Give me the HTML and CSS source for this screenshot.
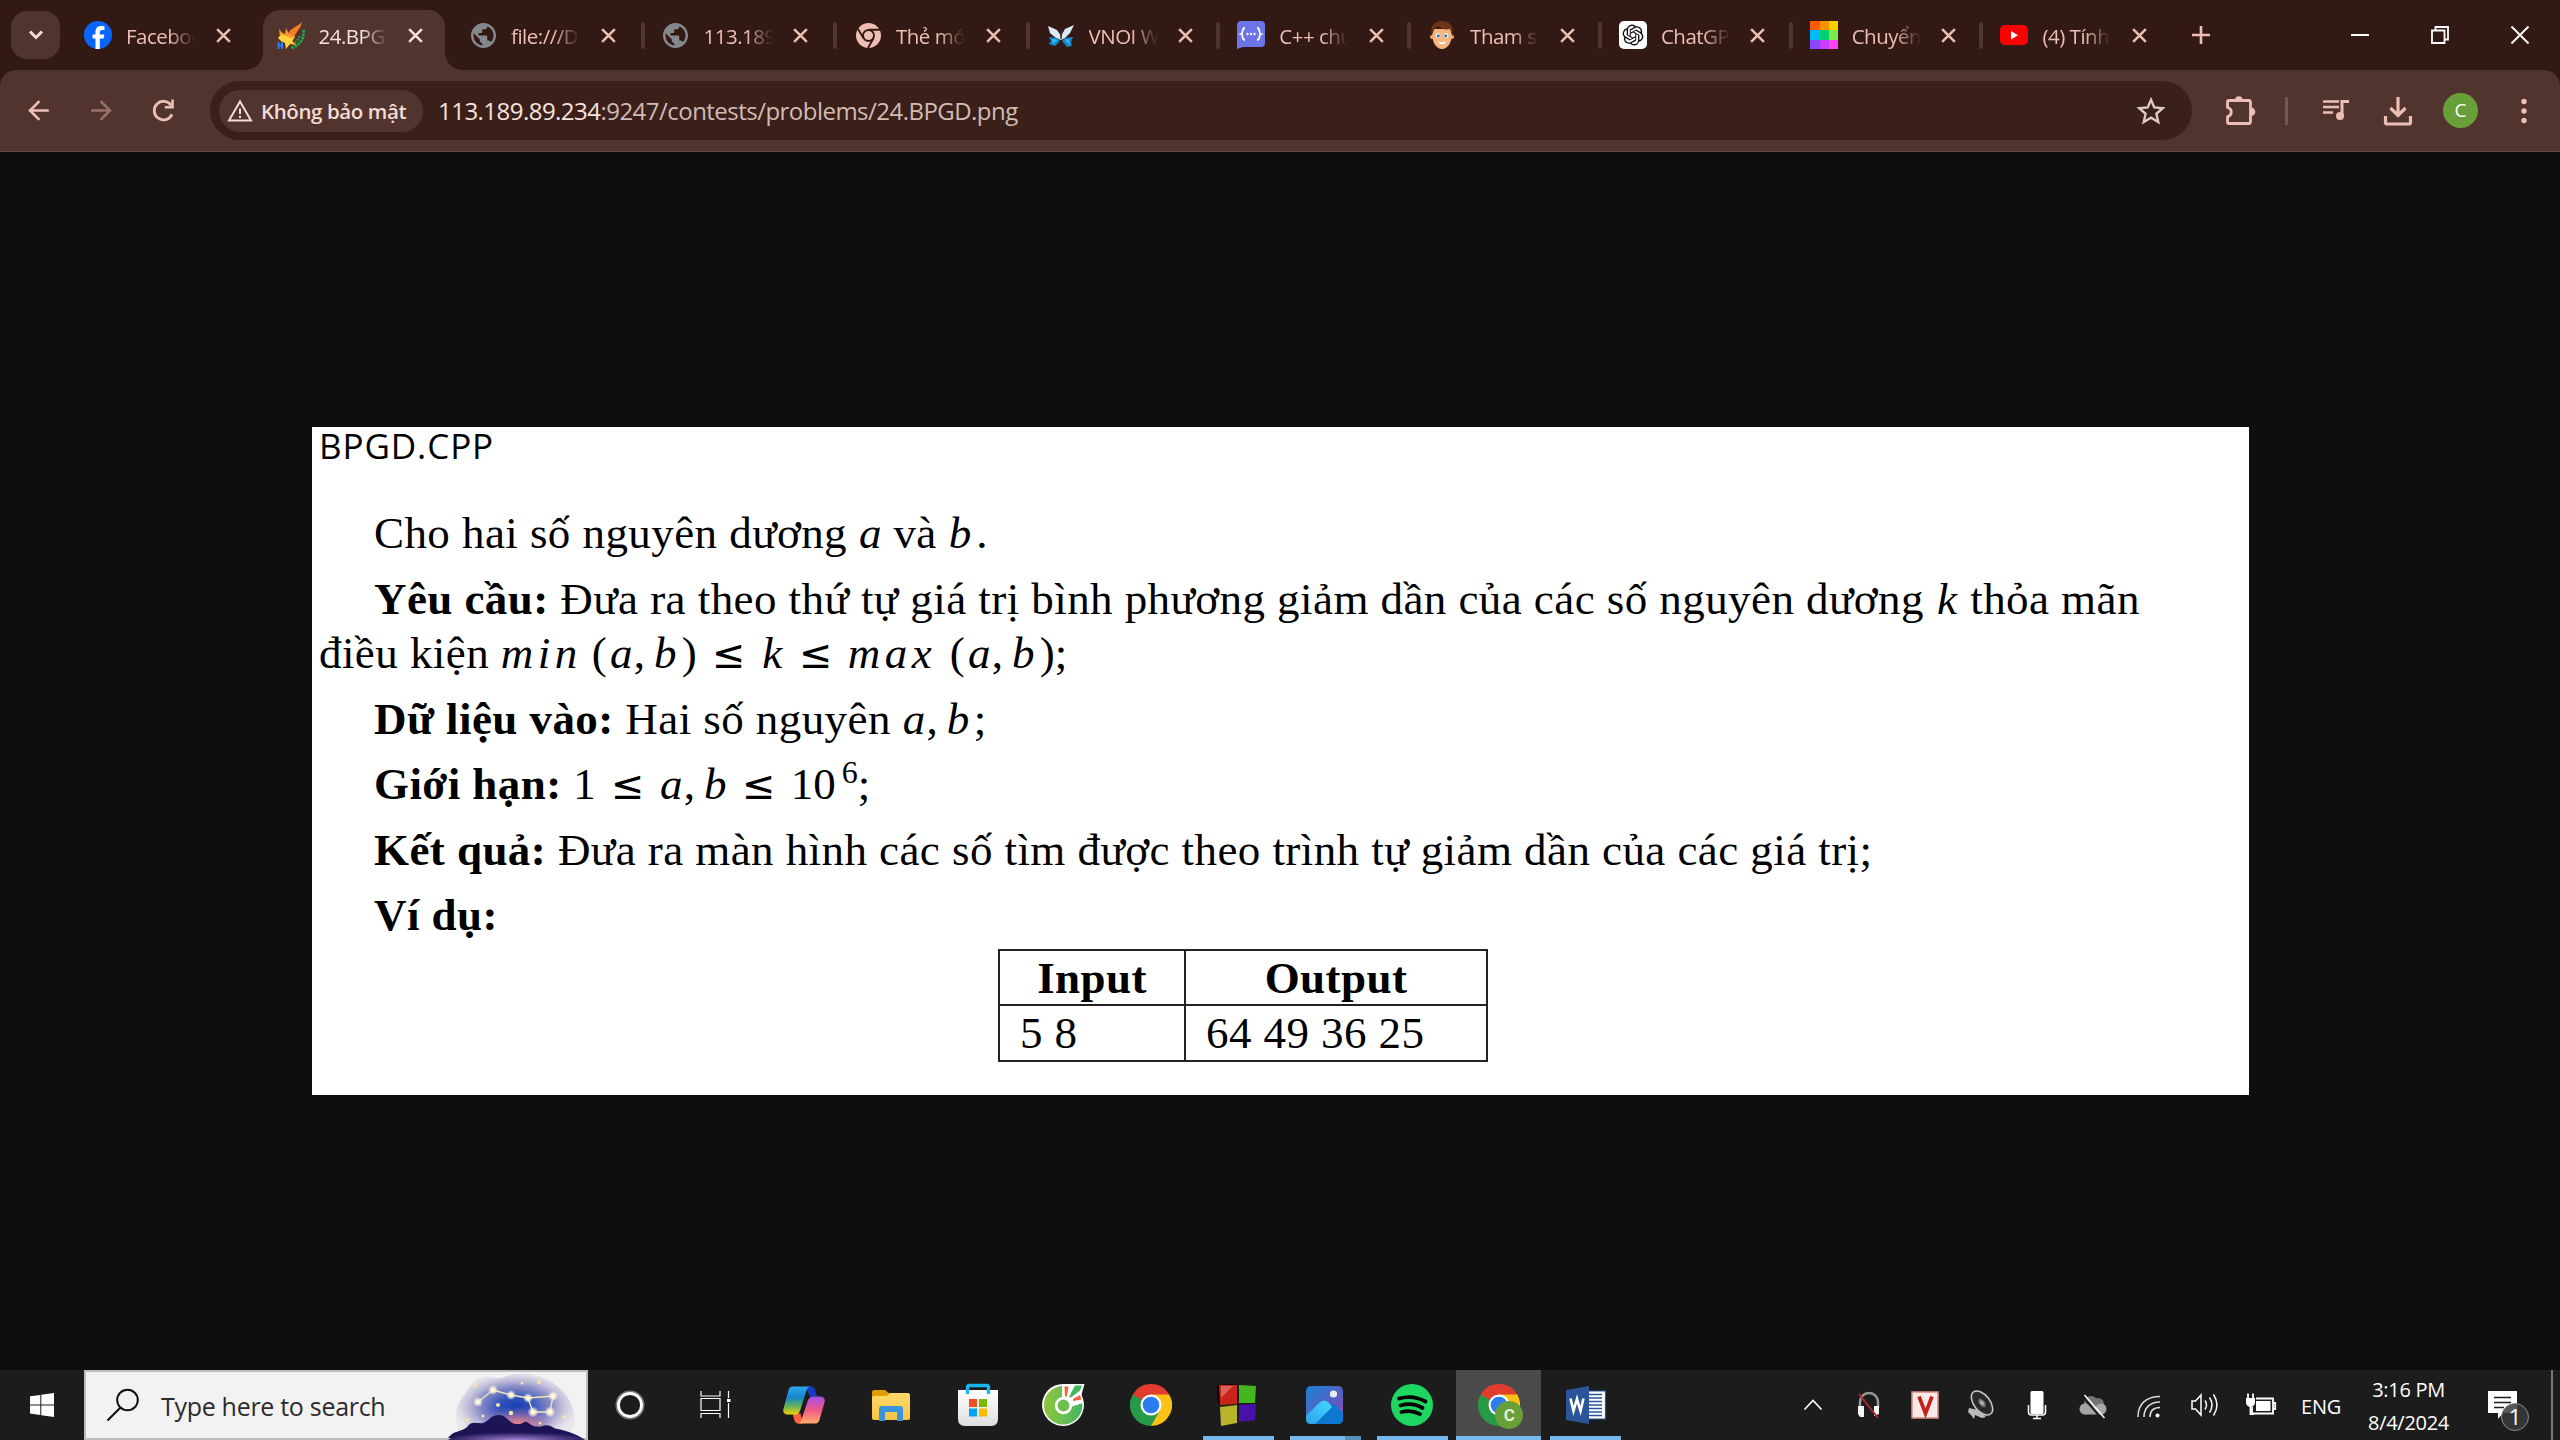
FILE: index.html
```html
<!DOCTYPE html>
<html lang="vi">
<head>
<meta charset="utf-8">
<title>24.BPGD.png</title>
<link rel="stylesheet" href="styles.css">
</head>
<body>
<svg class="defs" width="0" height="0">
  <defs>
    <symbol id="close" viewBox="0 0 16 16"><path d="M2 2l12 12M14 2L2 14" fill="none" stroke="currentColor" stroke-width="2.4"/></symbol>
    <symbol id="globe" viewBox="2 2 20 20"><path fill="#85898d" d="M12 2C6.48 2 2 6.48 2 12s4.48 10 10 10 10-4.48 10-10S17.52 2 12 2zm-1 17.93c-3.95-.49-7-3.85-7-7.93 0-.62.08-1.21.21-1.79L9 15v1c0 1.100.9 2 2 2v1.930zm6.900-2.540c-.26-.81-1-1.390-1.900-1.390h-1v-3c0-.55-.45-1-1-1H8v-2h2c.55 0 1-.45 1-1V7h2c1.100 0 2-.9 2-2v-.41c2.930 1.190 5 4.060 5 7.410 0 2.080-.8 3.970-2.100 5.390z"/></symbol>
    <symbol id="chrome" viewBox="0 0 48 48">
      <path fill="#e33b2e" d="M24 24L3.200 12A24 24 0 0 1 44.800 12z"/>
      <path fill="#fbc116" d="M24 24V12H44.800A24 24 0 0 1 24 48z"/>
      <path fill="#259b48" d="M3.200 12A24 24 0 0 0 24 48L34.400 30 24 24z"/>
      <path fill="#e33b2e" d="M3.200 12L13.600 30 24 12z"/>
      <path fill="#259b48" d="M3.200 12L13.600 30 24 36 24 24z"/>
      <circle cx="24" cy="24" r="12" fill="#fff"/><circle cx="24" cy="24" r="9.500" fill="#2b7cf0"/>
    </symbol>
    <linearGradient id="cp1" x1="0" y1="0" x2="0" y2="1"><stop offset="0" stop-color="#2aa9ee"/><stop offset=".4" stop-color="#1685c9"/><stop offset=".7" stop-color="#62b35c"/><stop offset="1" stop-color="#f3d007"/></linearGradient>
    <linearGradient id="cp2" x1="0" y1="0" x2="0" y2="1"><stop offset="0" stop-color="#a350e8"/><stop offset=".5" stop-color="#f05888"/><stop offset="1" stop-color="#ffae68"/></linearGradient>
    <linearGradient id="folder" x1="0" y1="0" x2="0" y2="1"><stop offset="0" stop-color="#ffda6b"/><stop offset="1" stop-color="#f7c343"/></linearGradient>
    <linearGradient id="bag" x1="0" y1="0" x2="0" y2="1"><stop offset="0" stop-color="#fff"/><stop offset="1" stop-color="#dedede"/></linearGradient>
    <linearGradient id="coc" x1="0" y1="0" x2="1" y2="0"><stop offset="0" stop-color="#91c63e"/><stop offset="1" stop-color="#42b761"/></linearGradient>
    <linearGradient id="photo" x1="0" y1="0" x2="1" y2="1"><stop offset="0" stop-color="#1a82d4"/><stop offset=".65" stop-color="#615ac0"/><stop offset="1" stop-color="#a04db4"/></linearGradient>
    <linearGradient id="hill" x1="1" y1="0" x2="0" y2="1"><stop offset="0" stop-color="#44d9ff"/><stop offset="1" stop-color="#2da2ea"/></linearGradient>
    <radialGradient id="sky" cx=".5" cy=".5" r=".52"><stop offset="0" stop-color="#163fb4"/><stop offset=".25" stop-color="#2f50b9"/><stop offset=".6" stop-color="#8f90c8"/><stop offset="1" stop-color="#e4dbe4" stop-opacity=".5"/></radialGradient>
    <radialGradient id="dusk" cx=".5" cy=".5" r=".5"><stop offset="0" stop-color="#f08080"/><stop offset="1" stop-color="#a070b0" stop-opacity="0"/></radialGradient>
    <radialGradient id="star"><stop offset="0" stop-color="#fff"/><stop offset=".35" stop-color="#fff6cc"/><stop offset="1" stop-color="#fff" stop-opacity="0"/></radialGradient>
    <radialGradient id="ground" cx=".5" cy="1" r=".55"><stop offset="0" stop-color="#a783d6"/><stop offset="1" stop-color="#1c1454"/></radialGradient>
    <radialGradient id="cone"><stop offset="0" stop-color="#ddd"/><stop offset=".45" stop-color="#222"/><stop offset="1" stop-color="#333"/></radialGradient>
  </defs>
</svg>

<header class="tabstrip">
  <button class="tabsearch"><svg width="16" height="12" viewBox="0 0 16 12"><path d="M2 2.500l6 6 6-6" fill="none" stroke="#f3dcd6" stroke-width="3"/></svg></button>
  <div class="tabs">
    <div class="tab wide">
      <svg class="fav" viewBox="0 0 28 28"><circle cx="14" cy="14" r="14" fill="#0866ff"/><path fill="#fff" d="M11.500 28V17.500H8.600V13.500h2.900V11c0-4 2-6 5.800-6 1.500 0 2.600.2 3.200.4v3.700h-2c-2 0-2.700.8-2.700 2.500v1.900h4.500l-.7 4h-3.800V28z"/></svg>
      <span class="title">Facebook</span><svg class="x"><use href="#close"/></svg>
    </div>
    <div class="tab wide active">
      <svg class="fav" viewBox="0 0 28 28"><path fill="#f47c26" d="M11 13C13 7 20 6 25 1c-1 5-3 7-5 10l-4 6-4 1z"/><path fill="#f79a28" d="M2 7c1 3 3 5 6 6l1-6 3 6 6 2-4 8-5-1-6-5z"/><path fill="#ffd33d" d="M1 17c2-3 5-4 8-2l5 2 4-1-3 4 5 4-7-1-4 5-1-6-4-2z"/><path d="M26.500 9c1 8-3 15-12 18" fill="none" stroke="#15b34a" stroke-width="2.600" stroke-dasharray="2.500 1"/><path d="M22.500 15c-1 3-3 6-6 7" fill="none" stroke="#15b34a" stroke-width="1.600" stroke-dasharray="2 1"/><path d="M1.500 21v7M5 21v7M1.500 24.500H5" stroke="#2b7df0" stroke-width="2"/></svg>
      <span class="title">24.BPGD</span><svg class="x"><use href="#close"/></svg>
    </div>
    <div class="tab wide"><svg class="fav pad"><use href="#globe"/></svg><span class="title">file:///D:/</span><svg class="x"><use href="#close"/></svg></div>
    <div class="tab wide sep"><svg class="fav pad"><use href="#globe"/></svg><span class="title">113.189.8</span><svg class="x"><use href="#close"/></svg></div>
    <div class="tab wide sep">
      <svg class="fav pad" viewBox="0 0 24 24"><circle cx="12" cy="12" r="12" fill="#edbfb4"/><circle cx="12" cy="12" r="5.300" fill="none" stroke="#341913" stroke-width="1.800"/><path d="M12 6.500h11M7.200 14.700L1.800 5.500M16.800 14.700L11.500 24" stroke="#341913" stroke-width="1.800"/></svg>
      <span class="title">Thẻ mới</span><svg class="x"><use href="#close"/></svg>
    </div>
    <div class="tab sep">
      <svg class="fav" viewBox="0 0 28 28"><path fill="#dcecf6" d="M1 5l9 4 4 6 4-7 9-4-4 8-5 5-4 2-5-2-6-5z"/><path fill="#1487cf" d="M2 16l8 1 3 3-5 5-6-2 2-3zM26 16l-8 1-3 3 5 6 5-1-1-4z"/><path fill="#35b7ee" d="M5 18l6 1-5 4zM18 19l5 5-1-6z"/><path d="M13 9l1 9 1-9" fill="none" stroke="#334" stroke-width="1"/></svg>
      <span class="title">VNOI Wiki</span><svg class="x"><use href="#close"/></svg>
    </div>
    <div class="tab sep">
      <svg class="fav" viewBox="0 0 28 28"><path fill="#6c74e8" d="M4 0h20a4 4 0 0 1 4 4v18a4 4 0 0 1-4 4H6l-6 2V4a4 4 0 0 1 4-4z"/><path d="M8 7c-4 0-1 5-4 6 3 1 0 6 4 6M20 7c4 0 1 5 4 6-3 1 0 6-4 6" fill="none" stroke="#fff" stroke-width="1.800"/><circle cx="10.500" cy="13" r="1.200" fill="#fff"/><circle cx="14" cy="13" r="1.200" fill="#fff"/><circle cx="17.500" cy="13" r="1.200" fill="#fff"/></svg>
      <span class="title">C++ chuẩn</span><svg class="x"><use href="#close"/></svg>
    </div>
    <div class="tab sep">
      <svg class="fav" viewBox="0 0 28 28"><path fill="#f5b480" d="M4 12h20c0 9-4 16-10 16S4 21 4 12z"/><circle cx="4" cy="16" r="2" fill="#f0a874"/><circle cx="24" cy="16" r="2" fill="#f0a874"/><path fill="#f5b480" d="M5 8h18v8H5z"/><path fill="#6d3518" d="M4 14C1 4 8 0 14 0s13 4 10 14l-2-6c-4 1-10 0-12-3L6 9z"/><circle cx="10" cy="14.500" r="2.300" fill="#fff"/><circle cx="18" cy="14.500" r="2.300" fill="#fff"/><circle cx="10.300" cy="14.700" r="1.500" fill="#2a78a8"/><circle cx="17.700" cy="14.700" r="1.500" fill="#2a78a8"/><path fill="#fff" d="M9.500 20.500q4.500 1.500 9 0-4.500 5.500-9 0z"/></svg>
      <span class="title">Tham số</span><svg class="x"><use href="#close"/></svg>
    </div>
    <div class="tab sep">
      <svg class="fav" viewBox="0 0 28 28"><rect width="28" height="28" rx="5" fill="#fff"/><g transform="translate(3.600 3.600) scale(.867)"><path fill="#111" d="M22.2819 9.8211a5.9847 5.9847 0 0 0-.5157-4.9108 6.0462 6.0462 0 0 0-6.5098-2.9A6.0651 6.0651 0 0 0 4.9807 4.1818a5.9847 5.9847 0 0 0-3.9977 2.9 6.0462 6.0462 0 0 0 .7427 7.0966 5.98 5.98 0 0 0 .511 4.9107 6.051 6.051 0 0 0 6.5146 2.9001A5.9847 5.9847 0 0 0 13.2599 24a6.0557 6.0557 0 0 0 5.7718-4.2058 5.9894 5.9894 0 0 0 3.9977-2.9001 6.0557 6.0557 0 0 0-.7475-7.0729zm-9.022 12.6081a4.4755 4.4755 0 0 1-2.8764-1.0408l.1419-.0804 4.7783-2.7582a.7948.7948 0 0 0 .3927-.6813v-6.7369l2.02 1.1686a.071.071 0 0 1 .038.052v5.5826a4.504 4.504 0 0 1-4.4945 4.4944zm-9.6607-4.1254a4.4708 4.4708 0 0 1-.5346-3.0137l.142.0852 4.783 2.7582a.7712.7712 0 0 0 .7806 0l5.8428-3.3685v2.3324a.0804.0804 0 0 1-.0332.0615L9.74 19.9502a4.4992 4.4992 0 0 1-6.1408-1.6464zM2.3408 7.8956a4.485 4.485 0 0 1 2.3655-1.9728V11.6a.7664.7664 0 0 0 .3879.6765l5.8144 3.3543-2.0201 1.1685a.0757.0757 0 0 1-.071 0l-4.8303-2.7865A4.504 4.504 0 0 1 2.3408 7.872zm16.5963 3.8558L13.1038 8.364 15.1192 7.2a.0757.0757 0 0 1 .071 0l4.8303 2.7913a4.4944 4.4944 0 0 1-.6765 8.1042v-5.6772a.79.79 0 0 0-.407-.667zm2.0107-3.0231l-.142-.0852-4.7735-2.7818a.7759.7759 0 0 0-.7854 0L9.409 9.2297V6.8974a.0662.0662 0 0 1 .0284-.0615l4.8303-2.7866a4.4992 4.4992 0 0 1 6.6802 4.66zM8.3065 12.863l-2.02-1.1638a.0804.0804 0 0 1-.038-.0567V6.0742a4.4992 4.4992 0 0 1 7.3757-3.4537l-.142.0805L8.704 5.459a.7948.7948 0 0 0-.3927.6813zm1.0976-2.3654l2.602-1.4998 2.6069 1.4998v2.9994l-2.5974 1.4997-2.6067-1.4997Z"/></g></svg>
      <span class="title">ChatGPT</span><svg class="x"><use href="#close"/></svg>
    </div>
    <div class="tab sep">
      <svg class="fav" viewBox="0 0 28 28"><path fill="#ff5a00" d="M0 0h10v9H0z"/><path fill="#ff9100" d="M10 0h9v9h-9z"/><path fill="#ffd000" d="M19 0h9v9h-9z"/><path fill="#00baff" d="M0 9h10v10H0z"/><path fill="#00cf6b" d="M10 9h9v10h-9z"/><path fill="#80e74d" d="M19 9h9v10h-9z"/><path fill="#8b46ff" d="M0 19h10v9H0z"/><path fill="#c93dff" d="M10 19h9v9h-9z"/><path fill="#ff42f5" d="M19 19h9v9h-9z"/></svg>
      <span class="title">Chuyển đ</span><svg class="x"><use href="#close"/></svg>
    </div>
    <div class="tab sep">
      <svg class="fav" viewBox="0 0 28 28"><rect y="4" width="28" height="20" rx="5" fill="#f00"/><path fill="#fff" d="M11 10v8.500l7-4.250z"/></svg>
      <span class="title">(4) Tính t</span><svg class="x"><use href="#close"/></svg>
    </div>
  </div>
  <button class="newtab"><svg width="18" height="18" viewBox="0 0 18 18"><path d="M9 0v18M0 9h18" stroke="#edbfb4" stroke-width="2.600"/></svg></button>
  <div class="wincontrols">
    <svg viewBox="0 0 18 18"><path d="M0 9h18" stroke="#fff" stroke-width="2"/></svg>
    <svg viewBox="0 0 18 18"><path d="M1 4.500h12.500V17H1zM4.500 4.500V1H17v12.500h-3.500" fill="none" stroke="#fff" stroke-width="1.800"/></svg>
    <svg viewBox="0 0 18 18"><path d="M.5.5l17 17M17.500.5l-17 17" stroke="#fff" stroke-width="1.900"/></svg>
  </div>
</header>

<nav class="toolbar">
  <div class="navbtns">
    <svg class="ic" viewBox="0 0 24 24"><path fill="#edbfb4" d="M20 11H7.830l5.590-5.590L12 4l-8 8 8 8 1.410-1.410L7.830 13H20v-2z"/></svg>
    <svg class="ic" viewBox="0 0 24 24"><path fill="#967069" d="M4 13h12.170l-5.590 5.590L12 20l8-8-8-8-1.410 1.410L16.170 11H4v2z"/></svg>
    <svg class="ic" viewBox="0 0 24 24"><path d="M18.600 15A7.200 7.200 0 1 1 18 8" fill="none" stroke="#edbfb4" stroke-width="2.200"/><path d="M20 3.500V10.500H13V8.600h5V3.500z" fill="#edbfb4"/></svg>
  </div>
  <div class="omnibox">
    <div class="chip">
      <svg width="26" height="23" viewBox="0 0 26 23"><path d="M13 2.500L24 21.500H2z" fill="none" stroke="#f3dcd6" stroke-width="2"/><path d="M13 9.500v5.500M13 16.800v2.200" stroke="#f3dcd6" stroke-width="2"/></svg>
      <span>Không bảo mật</span>
    </div>
    <div class="url"><b>113.189.89.234</b>:9247/contests/problems/24.BPGD.png</div>
    <svg class="fave" viewBox="0 0 28 28"><path d="M14 3.500l3.100 7.200 7.900.7-6 5.200 1.800 7.700-6.800-4.100-6.800 4.100L9 16.600l-6-5.200 7.900-.7z" fill="none" stroke="#ddc9c4" stroke-width="2.200"/></svg>
  </div>
  <div class="actions">
    <svg viewBox="0 0 32 32"><path d="M5 5.500h20a1.500 1.500 0 0 1 1.500 1.500v20a1.500 1.500 0 0 1-1.500 1.500H5A1.500 1.500 0 0 1 3.500 27v-5.500c5-1 5-8 0-9V7A1.500 1.500 0 0 1 5 5.500z" fill="none" stroke="#edbfb4" stroke-width="2.800" stroke-linejoin="round"/><path fill="#edbfb4" d="M11 5a3.800 3.800 0 0 1 7.600 0zM27 12.500a4.300 4.300 0 0 1 0 8.600z"/></svg>
    <i class="bar"></i>
    <svg viewBox="0 0 32 32"><path d="M3 6.500h16M3 12h16M3 17.500h10" stroke="#edbfb4" stroke-width="2.600"/><path d="M20.500 21V5H29v3h-5.500v13" fill="#edbfb4"/><circle cx="20" cy="21" r="4" fill="#edbfb4"/></svg>
    <svg viewBox="0 0 32 32"><path d="M16 2v18M8.500 13l7.500 7.500 7.500-7.500M3.500 21v6.500a1.500 1.500 0 0 0 1.500 1.500h22a1.500 1.500 0 0 0 1.500-1.500V21" fill="none" stroke="#edbfb4" stroke-width="3.200"/></svg>
    <span class="avatar">C</span>
    <svg viewBox="0 0 32 32"><circle cx="16" cy="6.500" r="2.700" fill="#edbfb4"/><circle cx="16" cy="16" r="2.700" fill="#edbfb4"/><circle cx="16" cy="25.500" r="2.700" fill="#edbfb4"/></svg>
  </div>
</nav>

<main class="viewer">
  <article class="sheet">
    <h1>BPGD.CPP</h1>
    <p class="l1">Cho hai số nguyên dương <i class="v">a</i> và <i class="v">b</i><span class="dot">.</span></p>
    <p class="flat l2"><strong>Yêu cầu:</strong> Đưa ra theo thứ tự giá trị bình phương giảm dần của các số nguyên dương <i class="v">k</i> thỏa mãn</p>
    <p class="cont">điều kiện <i class="fn min">min</i><span class="par">(</span><i class="v">a</i><span class="comma">,</span><i class="v">b</i><span class="par r">)</span><span class="rel">≤</span><i class="v">k</i><span class="rel">≤</span><i class="fn max">max</i><span class="par">(</span><i class="v">a</i><span class="comma">,</span><i class="v">b</i><span class="par r">)</span>;</p>
    <p><strong>Dữ liệu vào:</strong> Hai số nguyên <i class="v">a</i><span class="comma">,</span><i class="v">b</i><span class="dot">;</span></p>
    <p><strong>Giới hạn:</strong> <span class="num">1</span><span class="rel">≤</span><i class="v">a</i><span class="comma">,</span><i class="v">b</i><span class="rel">≤</span><span class="num">10</span><span class="num exp">6</span>;</p>
    <p><strong>Kết quả:</strong> Đưa ra màn hình các số tìm được theo trình tự giảm dần của các giá trị;</p>
    <p><strong>Ví dụ:</strong></p>
    <table>
      <tr><th>Input</th><th>Output</th></tr>
      <tr><td>5 8</td><td>64 49 36 25</td></tr>
    </table>
  </article>
</main>

<footer class="taskbar">
  <div class="start"><svg width="24" height="24" viewBox="0 0 24 24"><path fill="#fff" d="M0 3.300l10.300-1.400v9.500H0zM11.300 1.700L24 0v11.400H11.300zM0 12.400h10.300v9.600L0 20.600zM11.300 12.400H24V24l-12.700-1.800z"/></svg></div>
  <div class="search">
    <svg class="lens" width="34" height="34" viewBox="0 0 34 34"><circle cx="21.500" cy="12" r="10.300" fill="none" stroke="#111" stroke-width="2"/><path d="M14.500 19.500L1.500 32.500" stroke="#111" stroke-width="2.200"/></svg>
    <span>Type here to search</span>
    <svg class="scene" width="138" height="66" viewBox="0 0 138 66">
      <path fill="url(#sky)" d="M8 46C6 30 16 22 22 12 32-4 46 6 54 4 76-6 90 2 104 8c12 8 26 24 22 44l-8 14H12z"/>
      <ellipse cx="70" cy="50" rx="36" ry="18" fill="url(#dusk)"/>
      <path fill="#1c1454" d="M0 64c6-8 14-6 19-11 4-6 8-4 12-4 8 2 10-8 20-8 8 0 11 10 18 9 6 1 6-3 10-2 6 4 8 6 13 5 6-3 10-2 14 1 6 6 24 4 29 12z"/>
      <path fill="url(#ground)" d="M0 66c20-14 44-14 70-14s50 2 67 14z"/>
      <path d="M30 28L45 16 63 21 80 24 105 22 102 38H85L80 24" fill="none" stroke="#f4e9b8" stroke-width="1.300"/>
      <g fill="url(#star)"><circle cx="30" cy="28" r="5"/><circle cx="45" cy="16" r="5"/><circle cx="63" cy="21" r="5"/><circle cx="80" cy="24" r="5"/><circle cx="105" cy="22" r="5"/><circle cx="102" cy="38" r="5.500"/><circle cx="85" cy="38" r="5.500"/></g>
      <g fill="#f5e3a8"><circle cx="27" cy="11" r="2"/><circle cx="91" cy="8" r="2"/><circle cx="74" cy="9" r="1.500"/><circle cx="19" cy="46" r="2"/><circle cx="35" cy="42" r="1.500"/><circle cx="50" cy="31" r="2"/><circle cx="63" cy="39" r="2.200"/><circle cx="116" cy="43" r="2"/><circle cx="92" cy="49" r="1.300"/></g>
    </svg>
  </div>
  <div class="apps">
    <div><svg viewBox="0 0 42 42"><circle cx="21" cy="21" r="13.300" fill="none" stroke="#777" stroke-width="2.500"/><circle cx="21" cy="21" r="11.500" fill="none" stroke="#fff" stroke-width="2.800"/></svg></div>
    <div><svg viewBox="2 0 42 42"><path d="M7 7v5h19V7M7 14.500h19v12H7zM7 34v-4.500h19V34M34.500 7v7M34.500 19v15" fill="none" stroke="#fff" stroke-width="1.200"/><path fill="#fff" d="M33 15h3.500v3H33z"/></svg></div>
    <div><svg viewBox="0 0 42 42"><path fill="#173cc4" d="M22 2.500h6q3 0 4 3l2 7h-7z"/><path fill="#f8613b" d="M20 39.500h-5q-2.500 0-3.500-3l-2-7h8z"/><path fill="url(#cp1)" d="M10 2.500h17c-3 1-3.500 4-4.500 7l-5 16c-1 3-2.500 5-5.500 5H5c-4 0-5.500-2.500-4.500-6L5 8c1-4 2-5.500 5-5.500z"/><path fill="url(#cp2)" d="M32 39.500H15c3-1 3.500-4 4.500-7l5-15c1-3.500 3-5 5.500-5h7c4 0 5.500 3 4.500 6L37 34c-1 4-2 5.500-5 5.500z"/></svg></div>
    <div><svg viewBox="0 0 42 42"><path fill="#e39c00" d="M2 8q0-2 2-2h11l5 4v6H2z"/><path fill="url(#folder)" d="M2 14q0-2 2-2h13l3-3h18q2 0 2 2v23q0 2-2 2H4q-2 0-2-2z"/><path fill="#3a94dc" d="M9 37V25q0-3 3-3h18q3 0 3 3v12h-6v-9H15v9z"/></svg></div>
    <div><svg viewBox="0 0 42 42"><path fill="url(#bag)" d="M1 6h40v29q0 7-7 7H8q-7 0-7-7z"/><path d="M10.500 10V3.500q0-2 2-2h17q2 0 2 2V10" fill="none" stroke="#18b5ee" stroke-width="3.400"/><path fill="#f25022" d="M12 15h8v8h-8z"/><path fill="#7fba00" d="M22 15h8v8h-8z"/><path fill="#00a4ef" d="M12 24.500h8v8h-8z"/><path fill="#ffb900" d="M22 24.500h8v8h-8z"/></svg></div>
    <div><svg viewBox="0 0 42 42"><path fill="#fff" d="M21 0h20.500l-2 7-1 4A21 21 0 1 1 21 0z"/><path fill="url(#coc)" d="M19 2a19.300 19.300 0 1 0 20.300 17L29 22.500 20 20z"/><path fill="#fff" d="M19 1h7l12 8 2 10-12 3h-9z"/><path fill="#f3643c" d="M21.500 2.500h4L24 12.500h-2zM37 11l1.500 4.500-8.500 1.500v-2z"/><path fill="#42b761" d="M32 1.500h7l-2 5-9 7-2-.5z"/><circle cx="20.500" cy="21.500" r="7.300" fill="#6dbf4b" stroke="#fff" stroke-width="2.800"/></svg></div>
    <div><svg><use href="#chrome"/></svg></div>
    <div class="open"><svg viewBox="0 0 42 42"><path fill="#0a0000" d="M0 1l20-1v20H1z"/><path fill="#c9241b" d="M2 1h18v19L3 21z"/><path fill="#e98a7d" d="M4 2h12L4 14z" opacity=".6"/><path fill="#43b51f" d="M22 1l17 1-1 17H22z"/><path fill="#b9b52a" d="M3 23l17-2v18L4 42z"/><path fill="#4a10ab" d="M22 21l17-1-1 16-16 2z"/></svg></div>
    <div class="open more"><svg viewBox="0 0 42 42"><rect x="2" y="2" width="37" height="38" rx="5" fill="url(#photo)"/><path fill="#0c78cf" d="M8 40l18-18q3-3 6 0l7 7v6q0 5-5 5z"/><path fill="url(#hill)" d="M2 32l13-13q5-5 10 0l3 4L11 40H7q-5 0-5-5z"/><circle cx="29.500" cy="10" r="3.600" fill="#e8eaf2"/></svg></div>
    <div class="open"><svg viewBox="0 0 42 42"><circle cx="21" cy="21" r="21" fill="#1ed760"/><path d="M8 14.500q14-4 26.500 3M9.500 21.500q12-3.500 22 2.500M10.500 28q10-2.500 18.500 2.200" fill="none" stroke="#000" stroke-width="3.800" stroke-linecap="round"/></svg></div>
    <div class="open current"><svg><use href="#chrome"/></svg><em>C</em></div>
    <div class="open"><svg viewBox="0 0 42 42"><path fill="#fff" stroke="#2a5699" stroke-width="1.200" d="M22 7h18.500v28H22z"/><path d="M24 10.500h13M24 14h13M24 17.500h13M24 21h13M24 24.500h13M24 28h13M24 31.500h13" stroke="#2a5699" stroke-width="1.700"/><path fill="#2a5699" d="M1 6l23-4v38L1 36z"/><path d="M5.500 14.500l3 12.500 3.500-12 3.500 12 3-12.500" fill="none" stroke="#fff" stroke-width="2.600"/></svg></div>
  </div>
  <div class="tray">
    <svg viewBox="0 0 30 30"><path d="M6.500 19.500l8.500-9 8.500 9" fill="none" stroke="#fff" stroke-width="1.600"/></svg>
    <svg viewBox="0 0 30 30"><path d="M6 18V12a9 9 0 0 1 18 0v6" fill="none" stroke="#999" stroke-width="2.500"/><path fill="#f4f4f4" d="M4 16h6v11H6l-2-3zM20 16h5v8l-5 2z"/><path d="M5 4l19 24" stroke="#b3262b" stroke-width="2"/></svg>
    <svg viewBox="0 0 30 30"><path fill="#fbe9e7" stroke="#dd8883" stroke-width="1.500" d="M2 2h26v26H2z"/><path d="M9 6.500l6.500 17L22 6.500" fill="none" stroke="#c4201c" stroke-width="3.600"/></svg>
    <svg viewBox="0 0 30 30"><ellipse cx="16" cy="13" rx="8" ry="14" transform="rotate(-38 16 13)" fill="url(#cone)" stroke="#c9c9c9" stroke-width="1.500"/><path fill="#bbb" d="M3 18l9 2 8 7-4 1-7-3-1 4-3-4-3-3z"/></svg>
    <svg viewBox="0 0 30 30"><rect x="8.500" y="1" width="13" height="23" rx="1.500" fill="#fff"/><path d="M6.500 15v7q0 3 3 3h11q3 0 3-3v-7M15 25v4M11 28.500h8" fill="none" stroke="#fff" stroke-width="1.500"/></svg>
    <svg viewBox="0 0 30 30"><g fill="#757575"><circle cx="13" cy="13" r="7"/><circle cx="20" cy="14" r="6"/></g><g fill="#a6a6a6"><circle cx="7" cy="19" r="5.500"/><circle cx="23" cy="19" r="5.500"/><path d="M7 15l8 2 8-2v9.500H7z"/></g><path d="M5 7l19 22" stroke="#1c1c1c" stroke-width="2"/><path d="M6.500 5l20 23" stroke="#fff" stroke-width="1.500"/></svg>
    <svg viewBox="0 0 30 30"><path d="M4 27C4 14 12 6.500 26 6.500M10 27c0-9 6-15 16-15M16 27c0-6 3.500-9.500 10-9.500" fill="none" stroke="#ddd" stroke-width="1.500"/><circle cx="23.500" cy="25.500" r="2" fill="#fff"/></svg>
    <svg viewBox="0 0 30 30"><path d="M2 11h3.500L11 5v20l-5.500-6H2zM15 10.500q3 4.500 0 9M19.500 7.500q5 7.500 0 15M23.500 4.500q7 10.500 0 21" fill="none" stroke="#fff" stroke-width="1.500"/></svg>
    <svg viewBox="0 0 30 30"><path d="M10 8.500h17v15H6V17M27 13h2.200v6H27" fill="none" stroke="#fff" stroke-width="1.800"/><path fill="#fff" d="M10 11h14.500v10H10zM0 8h9v5q-1 4-4.500 4T0 13z"/><path d="M2 3.500V9M7 3.500V9M4.500 16v8H8" stroke="#fff" stroke-width="1.800" fill="none"/></svg>
    <span class="lang">ENG</span>
    <div class="clock"><span>3:16 PM</span><span>8/4/2024</span></div>
    <div class="notes"><svg width="29" height="29" viewBox="0 0 29 29"><path fill="#fff" d="M0 0h29v22H15l-5 6v-6H0z"/><path d="M6 6.500h17M6 11.500h17M6 16.500h10" stroke="#1c1c1c" stroke-width="1.500"/></svg><em>1</em></div>
    <div class="peek"></div>
  </div>
</footer>
</body>
</html>
```

FILE: styles.css
```css
* { box-sizing: border-box; }
body {
  margin: 0;
  width: 2560px;
  height: 1440px;
  overflow: hidden;
  display: flex;
  flex-direction: column;
  background: #0e0e0e;
  font-family: "Open Sans", "Noto Sans", sans-serif;
}
svg { display: block; flex: none; overflow: visible; }
.defs { position: absolute; }
button { border: 0; padding: 0; background: none; display: flex; align-items: center; justify-content: center; }

/* tab strip */
.tabstrip { height: 70px; flex: none; display: flex; background: #331913; }
.tabsearch { width: 49px; height: 48px; margin: 11px 5px 0 11px; border-radius: 16px; background: #51342d; }
.tabs { display: flex; }
.tab {
  position: relative;
  width: 190.8px;
  height: 70px;
  padding-left: 19px;
  display: flex;
  align-items: center;
  color: #edbfb4;
}
.wide { width: 192.5px; }
.fav { width: 28px; height: 28px; }
.fav.pad { width: 25px; height: 25px; margin: 0 1.5px; }
.title {
  width: 69px;
  margin: 2px 0 0 14px;
  overflow: hidden;
  white-space: nowrap;
  font-size: 20.5px;
  letter-spacing: -0.5px;
  -webkit-mask-image: linear-gradient(90deg, #000 62%, transparent 100%);
  mask-image: linear-gradient(90deg, #000 62%, transparent 100%);
}
.x { width: 17px; height: 17px; margin-left: 19.500px; }
.sep::before { content: ""; position: absolute; left: -2px; top: 22px; width: 4px; height: 27px; border-radius: 2px; background: #51342d; }
.active { color: #f7e3de; z-index: 0; }
.active::before {
  content: "";
  position: absolute;
  z-index: -1;
  left: 5px;
  top: 10px;
  width: 182px;
  height: 60px;
  border-radius: 17px 17px 0 0;
  background: #51342d;
}
.active::after {
  content: "";
  position: absolute;
  z-index: -1;
  left: -12px;
  bottom: 0;
  width: 216px;
  height: 17px;
  background:
    radial-gradient(circle at 0 0, transparent 16.500px, #51342d 17px) left / 17px 17px no-repeat,
    radial-gradient(circle at 100% 0, transparent 16.500px, #51342d 17px) right / 17px 17px no-repeat;
}
.newtab { width: 58px; height: 70px; }
.wincontrols { margin-left: auto; display: flex; align-items: center; gap: 62px; padding-right: 31px; }
.wincontrols svg { width: 18px; height: 18px; }

/* toolbar */
.toolbar {
  height: 82px;
  flex: none;
  display: flex;
  align-items: center;
  background: #51342d;
  border-bottom: 1px solid #644a44;
  border-radius: 16px 16px 0 0;
  position: relative;
}
.toolbar::before { content: ""; position: absolute; z-index: -1; left: 0; top: 0; width: 100%; height: 20px; background: #331913; }
.navbtns { display: flex; flex: none; gap: 31.500px; padding-left: 23px; width: 210px; }
.ic { width: 31px; height: 31px; }
.omnibox { width: 1982px; flex: none; height: 59px; padding: 0 26px 0 9px; border-radius: 30px; background: #3b1f19; display: flex; align-items: center; }
.chip { width: 204px; height: 42px; padding-left: 8px; border-radius: 21px; background: #51342d; display: flex; align-items: center; gap: 8px; color: #f3dcd6; font-size: 20.5px; font-weight: 600; letter-spacing: -0.4px; white-space: nowrap; }
.url { margin-left: 15px; flex: 1; font-size: 24px; letter-spacing: -0.53px; color: #d0bbb5; white-space: nowrap; }
.url b { font-weight: 400; color: #f7e3de; }
.fave { width: 30px; height: 30px; }
.actions { display: flex; flex: none; align-items: center; padding-left: 32px; }
.actions svg { width: 32px; height: 32px; margin-right: 30px; flex: none; }
.actions .bar { width: 3px; height: 28px; flex: none; margin: 0 32px 0 -1px; background: #755650; border-radius: 1px; }
.avatar { width: 35px; height: 35px; flex: none; margin: 0 30px 0 -1px; border-radius: 50%; background: #689f38; color: #fff; font-size: 19px; line-height: 35px; text-align: center; }

/* document picture */
.viewer { flex: 1; padding: 275px 0 0 312px; background: #0e0e0e; }
.sheet { width: 1937px; height: 668px; background: #fff; color: #000; padding-left: 7px; font: 45px/54px "Liberation Serif", "Times New Roman", serif; letter-spacing: 0.43px; }
h1 { margin: 0 0 42px; height: 37px; font: 400 35px/37px "Open Sans", sans-serif; letter-spacing: 0.9px; white-space: nowrap; }
.sheet p { height: 54px; margin: 0 0 11.600px; padding-left: 55px; white-space: nowrap; }
.sheet .l1 { margin-bottom: 12px; }
.sheet .flat { margin-bottom: 0; }
.sheet .cont { padding-left: 0; }
.sheet p span, .sheet p i { display: inline-block; line-height: 40px; letter-spacing: 0; }
.sheet .v { width: 23px; text-align: center; }
.sheet .fn { letter-spacing: 4.500px; }
.min { width: 91px; }
.max { width: 102px; }
.par { width: 18px; }
.par.r { width: 20px; text-align: right; }
.dot { width: 21px; text-align: center; }
.comma { width: 21px; padding-left: 1px; }
.rel { width: 64px; text-align: center; font-family: "DejaVu Sans", sans-serif; font-size: 40px; }
.exp { font-size: 32px; position: relative; top: -16px; width: 22px; text-align: right; }
table { width: 490px; margin-left: 679px; border-collapse: collapse; margin-top: -5px; }
th, td { border: 2px solid #222; padding: 0; height: 55.500px; line-height: 52px; text-align: center; }
td { text-align: left; padding-left: 20px; }
th:first-child { width: 186px; }

/* taskbar */
.taskbar { height: 70px; flex: none; display: flex; background: #1c1c1c; color: #fff; }
.start { width: 84px; display: flex; align-items: center; justify-content: center; }
.search { position: relative; width: 504px; border: 2px solid #bcbcbc; background: #f2f2f2; color: #2b2b2b; display: flex; align-items: center; padding-left: 20px; font-size: 25px; letter-spacing: -0.3px; }
.search span { margin-left: 21px; white-space: nowrap; padding-top: 2px; }
.scene { position: absolute; right: 0; bottom: -2px; }
.apps { display: flex; margin-left: -1.500px; }
.apps div { position: relative; width: 86.900px; display: flex; align-items: center; justify-content: center; }
.apps svg { width: 42px; height: 42px; }
.open::after { content: ""; position: absolute; left: 8px; bottom: 0; width: 71px; height: 4px; background: #76b9ed; }
.more::after { background: linear-gradient(90deg, #76b9ed 55px, #5a8fb8 55px); }
.current::before { content: ""; position: absolute; left: 1px; top: 0; width: 85px; height: 70px; background: #4a4a4a; }
.current::after { left: 1px; width: 85px; }
.current svg { position: relative; }
.apps em { position: absolute; left: 40px; top: 31px; width: 28px; height: 28px; border-radius: 50%; background: #689f38; font: 700 17px/28px Roboto, sans-serif; text-align: center; color: #e2eed8; }
.tray { margin-left: auto; display: flex; align-items: center; font-size: 20px; letter-spacing: -0.3px; }
.tray > svg { width: 30px; height: 30px; margin: 0 13px; }
.lang { width: 64px; text-align: center; padding-top: 2px; }
.clock { width: 111px; margin-right: 2px; text-align: center; display: flex; flex-direction: column; line-height: 33px; padding-top: 1px; }
.notes { position: relative; width: 85px; padding-left: 22px; }
.notes em { position: absolute; left: 35px; top: 12px; width: 28px; height: 28px; border: 1.500px solid #8a8a8a; border-radius: 50%; background: #3a3a3ad9; font-style: normal; font-size: 22px; line-height: 25px; text-align: center; }
.peek { width: 9px; height: 70px; border-left: 2px solid #777; }
```
